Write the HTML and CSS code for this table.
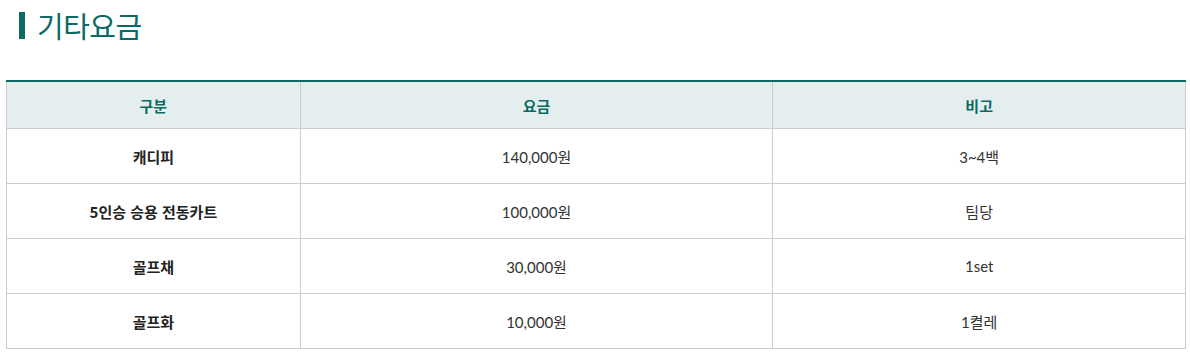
FILE: index.html
```html
<!DOCTYPE html>
<html lang="ko">
<head>
<meta charset="utf-8">
<link rel="stylesheet" href="styles.css">
</head>
<body>
<div class="page">
  <h2 class="title"><span class="title-bar"></span>기타요금</h2>
  <table class="fee-table">
    <colgroup>
      <col class="c1"><col class="c2"><col class="c3">
    </colgroup>
    <thead>
      <tr><th>구분</th><th>요금</th><th>비고</th></tr>
    </thead>
    <tbody>
      <tr><td class="name">캐디피</td><td>140,000원</td><td>3~4백</td></tr>
      <tr><td class="name">5인승 승용 전동카트</td><td>100,000원</td><td>팀당</td></tr>
      <tr><td class="name">골프채</td><td>30,000원</td><td>1set</td></tr>
      <tr><td class="name">골프화</td><td>10,000원</td><td>1켤레</td></tr>
    </tbody>
  </table>
</div>
</body>
</html>
```
FILE: styles.css
```css
html, body {
  margin: 0;
  padding: 0;
  background: #fff;
}
.page {
  padding: 0 4px 0 6px;
  font-family: Lato, "Noto Sans CJK KR", sans-serif;
  color: #333;
}
.title {
  display: flex;
  align-items: center;
  margin: 0;
  padding: 8px 0 0 13px;
  height: 34px;
  font-family: "Noto Sans CJK KR", sans-serif;
  font-weight: 400;
  font-size: 29px;
  color: #0b6a65;
  letter-spacing: -0.5px;
}
.title-bar {
  display: inline-block;
  width: 6px;
  height: 27px;
  background: #0b6a65;
  margin-right: 12px;
}
.fee-table {
  margin-top: 38px;
  width: 1180px;
  border-collapse: collapse;
  border-top: 2px solid #0b6a65;
  font-size: 15px;
}
.c1 { width: 294px; }
.c2 { width: 473px; }
.c3 { width: 413px; }
.fee-table th,
.fee-table td {
  border: 1px solid #cccccc;
  text-align: center;
  padding: 0;
}
.fee-table thead tr:first-child th {
  border-top: none;
}
.fee-table th {
  height: 46px;
  background: #e5eeee;
  color: #0b6a65;
  font-family: "Noto Sans CJK KR", sans-serif;
  font-weight: 700;
  font-size: 15px;
}
.fee-table td {
  height: 54px;
  color: #333;
}
.fee-table td.name {
  font-family: "Noto Sans CJK KR", sans-serif;
  font-weight: 700;
  color: #222;
}
```
